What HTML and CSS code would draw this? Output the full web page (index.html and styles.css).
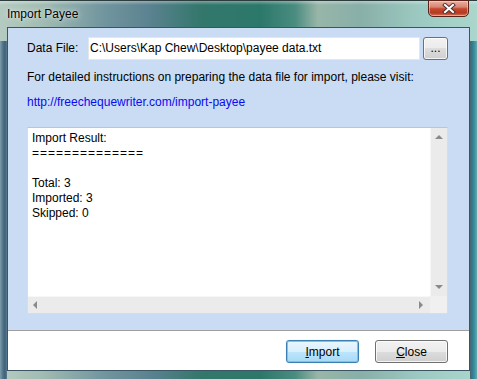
FILE: index.html
```html
<!DOCTYPE html>
<html>
<head>
<meta charset="utf-8">
<title>Import Payee</title>
<link rel="stylesheet" href="styles.css">
</head>
<body>
<div class="window">
  <div class="titlebar">
    <span class="title">Import Payee</span>
    <div class="close-btn">
      <svg width="14" height="11" viewBox="0 0 14 11">
        <path d="M3 2 L11 9 M11 2 L3 9" stroke="#4a3636" stroke-width="4" stroke-linecap="square" fill="none"/>
        <path d="M3 2 L11 9 M11 2 L3 9" stroke="#ffffff" stroke-width="2" stroke-linecap="square" fill="none"/>
      </svg>
    </div>
  </div>
  <div class="client">
    <div class="main">
      <div class="file-row">
        <span class="label">Data File:</span>
        <div class="input">C:\Users\Kap Chew\Desktop\payee data.txt</div>
        <button class="btn browse">...</button>
      </div>
      <p class="info">For detailed instructions on preparing the data file for import, please visit:</p>
      <a class="link" href="#">http://freechequewriter.com/import-payee</a>
      <div class="result">
        <div class="result-text"><div>Import Result:</div><div class="eq">==============</div><div>&nbsp;</div><div>Total: 3</div><div>Imported: 3</div><div>Skipped: 0</div></div>
        <div class="vscroll">
          <span class="arrow up"></span>
          <span class="arrow down"></span>
        </div>
        <div class="hscroll">
          <span class="arrow left"></span>
          <span class="arrow right"></span>
        </div>
        <div class="corner"></div>
      </div>
    </div>
    <div class="footer">
      <button class="btn default"><u>I</u>mport</button>
      <button class="btn"><u>C</u>lose</button>
    </div>
  </div>
</div>
</body>
</html>
```

FILE: styles.css
```css
html, body {
  margin: 0;
  padding: 0;
}

body {
  width: 477px;
  height: 379px;
  overflow: hidden;
  font-family: "Liberation Sans", Arial, sans-serif;
  font-size: 12px;
  color: #000;
}

.window {
  box-sizing: border-box;
  width: 477px;
  height: 379px;
  display: flex;
  flex-direction: column;
  border-top: 1px solid #2d3c3d;
  background:
    linear-gradient(to right, #7d9cab 0px, #50728a 3px, #3f6178 5px, #5c7e92 7px) left 40px / 7px 100% no-repeat,
    linear-gradient(to right, #4a6470 0px, #2f8494 3px, #3f98a4 5px, #6aa8b0 7px) right 40px / 7px 100% no-repeat,
    linear-gradient(to bottom, rgba(255,255,255,0.35) 0px, rgba(255,255,255,0) 4px),
    linear-gradient(to right,
      #b5cbc1 0px, #a2bdb3 40px, #7497a0 100px, #5a8290 150px,
      #34776c 200px, #2b786a 260px, #4a8c80 295px, #98b6a8 318px,
      #88afa8 360px, #9ccac2 420px, #aad6cc 477px);
}

.titlebar {
  height: 26px;
  display: flex;
  align-items: flex-start;
  padding: 0 8px 0 7px;
}

.title {
  line-height: 26px;
  text-shadow: 0 0 6px rgba(255,255,255,0.8), 0 0 2px rgba(255,255,255,0.6);
}

.close-btn {
  margin-left: auto;
  box-sizing: border-box;
  width: 41px;
  height: 17px;
  margin-top: -1px;
  border: 1px solid #5a2218;
  border-radius: 0 0 5px 5px;
  background: linear-gradient(to bottom, #e9b2a2 0%, #d98572 40%, #c4482e 52%, #b63a20 80%, #d07a62 100%);
  box-shadow: inset 0 0 0 1px rgba(255,220,210,0.5);
  display: flex;
  align-items: center;
  justify-content: center;
}

.client {
  flex: 1;
  margin: 0 7px 8px 7px;
  border: 1px solid #3d5560;
  display: flex;
  flex-direction: column;
  background: #fff;
}

.main {
  box-sizing: border-box;
  height: 302px;
  background: #c9dcf4;
  padding: 9px 21px 0 19px;
}

.file-row {
  display: flex;
  height: 23px;
}

.label {
  width: 61px;
  line-height: 23px;
}

.input {
  box-sizing: border-box;
  width: 332px;
  height: 23px;
  background: #fff;
  border: 1px solid #e0e7ef;
  padding-left: 1px;
  line-height: 21px;
  white-space: nowrap;
}

.btn {
  box-sizing: border-box;
  width: 73px;
  height: 23px;
  padding: 0;
  border: 1px solid #707070;
  border-radius: 3px;
  background: linear-gradient(to bottom, #f2f2f2 0%, #ebebeb 50%, #dddddd 50%, #cfcfcf 100%);
  box-shadow: inset 0 0 0 1px rgba(255,255,255,0.75);
  font-family: "Liberation Sans", Arial, sans-serif;
  font-size: 12px;
  color: #000;
}

.browse {
  width: 25px;
  margin-left: 3px;
  line-height: 19px;
}

.btn.default {
  border-color: #3c7fb1;
  background: linear-gradient(to bottom, #eaf6fd 0%, #d9f0fc 50%, #bee6fd 50%, #a7d9f5 100%);
  box-shadow: inset 0 0 0 1px #5ad2f8, 0 0 1px #7fd8f8;
}

.info {
  margin: 10px 0 0 0;
  line-height: 15px;
  white-space: nowrap;
}

.link {
  display: block;
  margin-top: 10px;
  line-height: 15px;
  color: #0a0af0;
  text-decoration: none;
}

.result {
  box-sizing: border-box;
  margin-top: 17px;
  width: 421px;
  height: 187px;
  border: 1px solid #d7dde4;
  border-top-color: #bfc5cc;
  background: #fff;
  display: grid;
  grid-template-columns: 1fr 17px;
  grid-template-rows: 1fr 17px;
}

.result-text {
  padding: 3px 4px 0 4px;
  line-height: 15px;
  white-space: pre;
}

.eq {
  letter-spacing: 1px;
}

.vscroll {
  position: relative;
  background: #ebebeb;
  border-left: 1px solid #f7f7f7;
}

.hscroll {
  position: relative;
  background: #ebebeb;
  border-top: 1px solid #f7f7f7;
}

.corner {
  background: #f0f0f0;
}

.arrow {
  position: absolute;
  width: 0;
  height: 0;
}

.arrow.up {
  left: 4px;
  top: 7px;
  border-left: 4px solid transparent;
  border-right: 4px solid transparent;
  border-bottom: 4px solid #8a8a8a;
}

.arrow.down {
  left: 4px;
  bottom: 7px;
  border-left: 4px solid transparent;
  border-right: 4px solid transparent;
  border-top: 4px solid #8a8a8a;
}

.arrow.left {
  left: 5px;
  top: 4px;
  border-top: 4px solid transparent;
  border-bottom: 4px solid transparent;
  border-right: 4px solid #8a8a8a;
}

.arrow.right {
  right: 7px;
  top: 4px;
  border-top: 4px solid transparent;
  border-bottom: 4px solid transparent;
  border-left: 4px solid #8a8a8a;
}

.footer {
  flex: 1;
  border-top: 1px solid #a0a0a0;
  display: flex;
  justify-content: flex-end;
  align-items: flex-start;
  gap: 16px;
  padding: 9px 21px 0 0;
}
```
